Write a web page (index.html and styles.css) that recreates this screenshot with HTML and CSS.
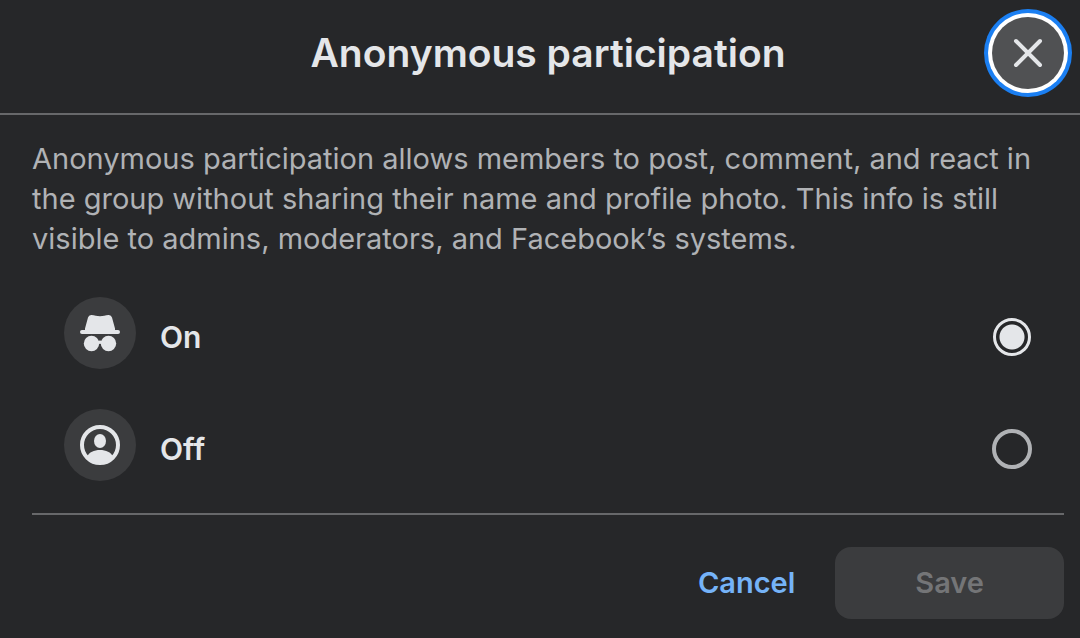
FILE: index.html
```html
<!DOCTYPE html>
<html lang="en">
<head>
<meta charset="utf-8">
<meta name="viewport" content="width=device-width, initial-scale=1">
<title>Anonymous participation</title>
<link rel="stylesheet" href="styles.css">
</head>
<body>
<form class="dialog" role="dialog" aria-labelledby="dialog-title">
  <header class="dialog-header">
    <h1 class="dialog-title" id="dialog-title">Anonymous participation</h1>
    <button class="close" type="button" aria-label="Close">
      <svg class="close-icon" viewBox="0 0 32 32" aria-hidden="true"><path d="M4 4 28 28M28 4 4 28" fill="none" stroke="currentColor" stroke-width="4" stroke-linecap="round"/></svg>
    </button>
  </header>
  <div class="dialog-body">
    <p class="description" id="description">Anonymous participation allows members to post, comment, and react in the group without sharing their name and profile photo. This info is still visible to admins, moderators, and Facebook’s systems.</p>
    <div class="options" role="radiogroup" aria-labelledby="dialog-title">
      <label class="option" for="anon-on">
        <span class="badge">
          <svg class="badge-icon" viewBox="0 0 40 40" aria-hidden="true"><path d="M5 15.500 8 4.500Q8.800 1.800 11.500 2C14.500 2.200 17 3.200 20 3.200S25.500 2.200 28.500 2Q31.200 1.800 32 4.500L35 15.500V17H38A2 2 0 0 1 38 21H2A2 2 0 0 1 2 17H5Z" fill="currentColor"/><circle cx="11.500" cy="30.500" r="7.700" fill="currentColor"/><circle cx="28.500" cy="30.500" r="7.700" fill="currentColor"/><path d="M17.500 28Q20 26.800 22.500 28V31.500Q20 30 17.500 31.500Z" fill="currentColor"/></svg>
        </span>
        <span class="option-name">On</span>
        <input class="radio" type="radio" id="anon-on" name="anonymous" value="on" checked>
      </label>
      <label class="option" for="anon-off">
        <span class="badge">
          <svg class="badge-icon" viewBox="0 0 40 40" aria-hidden="true"><circle cx="20" cy="20" r="18" fill="none" stroke="currentColor" stroke-width="4"/><ellipse cx="20" cy="16" rx="6" ry="7" fill="currentColor"/><path d="M7 32C9 27 14 25 20 25S31 27 33 32A18 18 0 0 1 7 32Z" fill="currentColor"/></svg>
        </span>
        <span class="option-name">Off</span>
        <input class="radio" type="radio" id="anon-off" name="anonymous" value="off">
      </label>
    </div>
  </div>
  <footer class="dialog-footer">
    <button class="button cancel" type="button">Cancel</button>
    <button class="button save" type="submit" disabled>Save</button>
  </footer>
</form>
</body>
</html>
```
FILE: styles.css
```css
* {
  box-sizing: border-box;
}

body {
  margin: 0;
  background: #262729;
  color: #e4e6e9;
  font-family: Inter, "Liberation Sans", sans-serif;
}

.dialog-header {
  display: grid;
  grid-template-columns: 72px 1fr 72px;
  align-items: center;
  padding: 17px 16px 24px 32px;
  border-bottom: 2px solid #67686a;
}

.dialog-title {
  grid-column: 2;
  margin: 0;
  font-size: 39px;
  line-height: 48px;
  font-weight: 600;
  text-align: center;
}

.close {
  display: grid;
  place-items: center;
  width: 72px;
  height: 72px;
  padding: 0;
  border: 0;
  border-radius: 50%;
  background: #505153;
  color: #e4e6e9;
  box-shadow: 0 0 0 4px #fff, 0 0 0 8px #1b7ff2;
}

.close-icon {
  width: 32px;
  height: 32px;
}

.dialog-body {
  margin: 0 16px 0 32px;
  padding-top: 24px;
  border-bottom: 2px solid #67686a;
}

.description {
  margin: 0;
  color: #b0b2b5;
  font-size: 29px;
  line-height: 40px;
}

.options {
  padding: 18px 32px 12px;
}

.option {
  display: flex;
  align-items: center;
  gap: 24px;
  height: 112px;
}

.badge {
  display: grid;
  place-items: center;
  width: 72px;
  height: 72px;
  border-radius: 50%;
  background: #3b3c3e;
}

.badge-icon {
  width: 40px;
  height: 40px;
}

.option-name {
  flex: 1;
  padding-top: 8px;
  font-size: 30px;
  line-height: 40px;
  font-weight: 600;
}

.radio {
  appearance: none;
  width: 40px;
  height: 40px;
  margin: 8px 0 0;
  border: 4px solid #b0b2b5;
  border-radius: 50%;
}

.radio:checked {
  width: 38px;
  height: 38px;
  margin-right: 1px;
  border: 3px solid #e4e6e9;
  background: radial-gradient(circle, #e4e6e9 12px, transparent 13px);
}

.dialog-footer {
  display: flex;
  justify-content: flex-end;
  gap: 8px;
  padding: 32px 16px 19px;
}

.button {
  height: 72px;
  padding: 0 32px;
  border: 0;
  border-radius: 16px;
  background: none;
  font: 600 29px/40px Inter, "Liberation Sans", sans-serif;
}

.cancel {
  color: #75b3f8;
}

.save {
  padding: 0 80px;
  background: #3b3c3e;
  color: #747577;
}
```
